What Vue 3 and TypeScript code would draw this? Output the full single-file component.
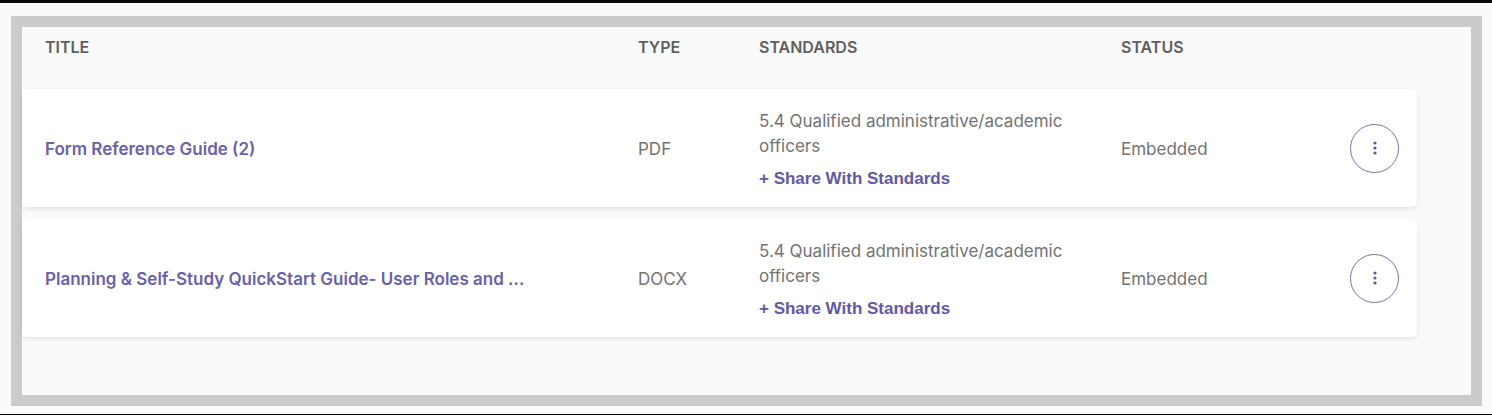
<script setup lang="ts">
interface ResourceFile {
  id: number
  title: string
  type: string
  standard: string
  status: string
}

const files: ResourceFile[] = [
  {
    id: 1,
    title: 'Form Reference Guide (2)',
    type: 'PDF',
    standard: '5.4 Qualified administrative/academic officers',
    status: 'Embedded',
  },
  {
    id: 2,
    title: 'Planning & Self-Study QuickStart Guide- User Roles and ...',
    type: 'DOCX',
    standard: '5.4 Qualified administrative/academic officers',
    status: 'Embedded',
  },
]
</script>

<template>
  <main class="page">
    <section class="frame">
      <table class="files">
        <colgroup>
          <col class="col-title" />
          <col class="col-type" />
          <col class="col-standards" />
          <col class="col-status" />
          <col class="col-menu" />
        </colgroup>
        <thead>
          <tr>
            <th scope="col">TITLE</th>
            <th scope="col">TYPE</th>
            <th scope="col">STANDARDS</th>
            <th scope="col">STATUS</th>
            <td></td>
          </tr>
        </thead>
        <tbody>
          <tr v-for="file in files" :key="file.id" class="row">
            <td><a class="title" href="#">{{ file.title }}</a></td>
            <td>{{ file.type }}</td>
            <td>
              <div class="standard">{{ file.standard }}</div>
              <button type="button" class="share">+ Share With Standards</button>
            </td>
            <td>{{ file.status }}</td>
            <td>
              <button type="button" class="menu" :aria-label="`Actions for ${file.title}`">
                <svg width="6" height="16" viewBox="0 0 6 16" aria-hidden="true">
                  <circle cx="3" cy="3" r="1.6" />
                  <circle cx="3" cy="8" r="1.6" />
                  <circle cx="3" cy="13" r="1.6" />
                </svg>
              </button>
            </td>
          </tr>
        </tbody>
      </table>
    </section>
  </main>
</template>

<style>
body {
  margin: 0;
  background: #fafafa;
}
</style>

<style scoped>
.page {
  box-sizing: border-box;
  min-height: 100vh;
  display: flex;
  padding: 13px 10px 8px 11px;
  border-top: 3px solid #0a0a0a;
  border-bottom: 1px solid #0a0a0a;
  background: #fafafa;
  color: #737373;
  font: 17px/25px Inter, "Liberation Sans", sans-serif;
}

.frame {
  flex: 1;
  min-width: 0;
  padding-right: 54px;
  border: 11px solid #cbcbcb;
}

.files {
  width: 100%;
  table-layout: fixed;
  border-collapse: separate;
  border-spacing: 0 12px;
}

.col-title {
  width: 616px;
}

.col-type {
  width: 121px;
}

.col-standards {
  width: 362px;
}

.col-menu {
  width: 67px;
}

th {
  height: 38px;
  padding: 0;
  vertical-align: top;
  text-align: left;
  font-size: 16px;
  line-height: 16px;
  font-weight: 600;
  color: #5f5f5f;
}

th:first-child,
td:first-child {
  padding-left: 23px;
}

.row {
  border-radius: 6px;
  box-shadow: 0 2px 5px rgba(0, 0, 0, 0.09);
}

.row td {
  box-sizing: border-box;
  height: 118px;
  padding-top: 3px;
  padding-bottom: 0;
  padding-right: 0;
  background: #fff;
  vertical-align: middle;
}

.row td:not(:first-child) {
  padding-left: 0;
}

.row td:last-child {
  padding-top: 0;
  border-radius: 0 6px 6px 0;
}

.title {
  color: #6a61a8;
  font-weight: 600;
  text-decoration: none;
}

.standard {
  max-width: 320px;
}

button {
  color: #6259a3;
  cursor: pointer;
}

.share {
  display: block;
  margin-top: 7px;
  padding: 0;
  border: 0;
  background: none;
  font: 700 17px/25px "Liberation Sans", Arial, sans-serif;
}

.menu {
  display: flex;
  align-items: center;
  justify-content: center;
  width: 49px;
  height: 49px;
  padding: 0;
  border: 1px solid #7a70b4;
  border-radius: 50%;
  background: #fff;
}

.menu svg {
  fill: #6259a3;
}
</style>
